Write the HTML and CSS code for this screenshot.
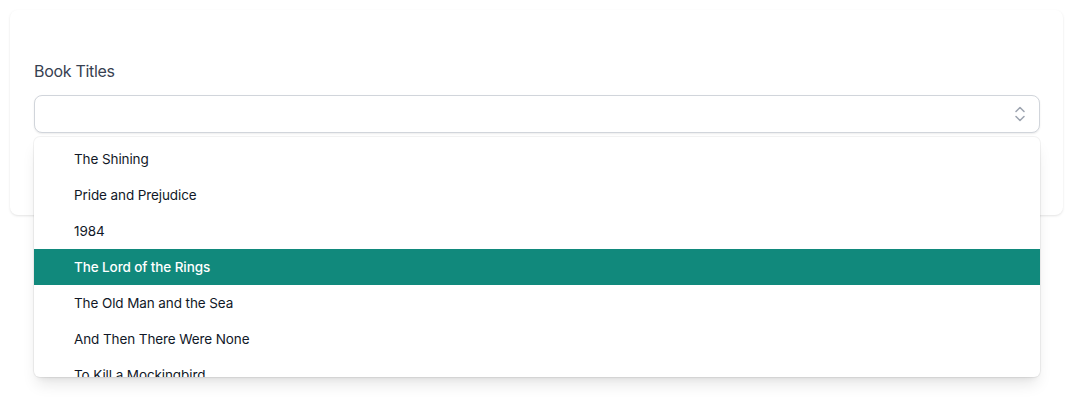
FILE: index.html
```html
<!DOCTYPE html>
<html>
<head>
<meta charset="utf-8">
<link rel="stylesheet" href="styles.css">
</head>
<body>
<div class="page">
<div class="card">
  <label class="label">Book Titles</label>
  <div class="combo">
    <div class="input">
      <svg class="chev" width="14" height="18" viewBox="0 0 14 18" fill="none" stroke="#9ca3af" stroke-width="1.5" stroke-linecap="round" stroke-linejoin="round"><path d="M3 6.5 L7 2.5 L11 6.5"/><path d="M3 11.5 L7 15.5 L11 11.5"/></svg>
    </div>
    <ul class="menu">
      <li class="opt">The Shining</li>
      <li class="opt">Pride and Prejudice</li>
      <li class="opt">1984</li>
      <li class="opt active">The Lord of the Rings</li>
      <li class="opt">The Old Man and the Sea</li>
      <li class="opt">And Then There Were None</li>
      <li class="opt">To Kill a Mockingbird</li>
    </ul>
  </div>
</div>
</div>
</body>
</html>
```

FILE: styles.css
```css
html, body { margin: 0; padding: 0; background: #fff; }
body {
  font-family: Inter, "Noto Sans", sans-serif;
}
.page {
  min-height: 404px;
  box-sizing: border-box;
  padding: 10px 16px 0 10px;
}
.card {
  background: #fff;
  border-radius: 8px;
  box-shadow: 0 1px 3px rgba(0,0,0,0.08), 0 1px 2px rgba(0,0,0,0.04);
  padding: 49px 23px 82px 24px;
}
.label {
  display: block;
  font-size: 16px;
  line-height: 24px;
  letter-spacing: -0.3px;
  color: #374151;
  margin-bottom: 12px;
}
.combo { position: relative; }
.input {
  height: 36px;
  border: 1px solid #d1d5db;
  border-radius: 8px;
  background: #fff;
  box-shadow: 0 1px 2px rgba(0,0,0,0.08);
  display: flex;
  align-items: center;
  justify-content: flex-end;
  padding-right: 12px;
}
.chev { display: block; }
.menu {
  position: absolute;
  left: 0; right: 0;
  top: 42px;
  margin: 0;
  padding: 4px 0 0;
  list-style: none;
  background: #fff;
  border-radius: 6px;
  height: 236px;
  overflow: hidden;
  box-shadow: 0 10px 15px -3px rgba(0,0,0,0.1), 0 4px 6px -4px rgba(0,0,0,0.1), 0 0 0 1px rgba(0,0,0,0.05);
  z-index: 2;
}
.opt {
  height: 36px;
  line-height: 36px;
  padding-left: 40px;
  font-size: 13.5px;
  letter-spacing: -0.1px;
  color: #111827;
}
.opt.active {
  background: #11897c;
  color: #fff;
  font-weight: 500;
}
```
